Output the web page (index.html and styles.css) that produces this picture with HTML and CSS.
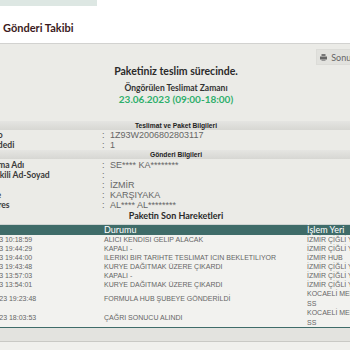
FILE: index.html
```html
<!DOCTYPE html>
<html lang="tr">
<head>
    <meta charset="UTF-8">
    <title>Gönderi Takibi</title>
    <link rel="stylesheet" href="styles.css">
</head>
<body>

    <div class="top"><div class="search_tab"></div></div>
    <div class="heading"><h1>Gönderi Takibi</h1></div>

    <div class="panel">
        <div class="sheet">
            <div class="tools">
                <button class="print_btn">
                    <svg width="7" height="7" viewBox="0 0 7 7"><rect x="1.5" y="0" width="4" height="2" fill="#777"/><rect x="0" y="2.5" width="7" height="3" fill="#666"/><rect x="1.5" y="5" width="4" height="2" fill="#999"/></svg>
                    Sonuç Yazdır
                </button>
            </div>

            <div class="status">
                <p class="status_title">Paketiniz teslim sürecinde.</p>
                <p class="status_label">Öngörülen Teslimat Zamanı</p>
                <p class="status_date">23.06.2023 (09:00-18:00)</p>
            </div>

            <div class="bar">Teslimat ve Paket Bilgileri</div>
            <div class="info_row"><span class="info_label">Takip No</span><span class="info_sep">:</span><span class="info_value">1Z93W2006802803117</span></div>
            <div class="info_row"><span class="info_label">Parça Adedi</span><span class="info_sep">:</span><span class="info_value">1</span></div>

            <div class="bar">Gönderi Bilgileri</div>
            <div class="info_row first"><span class="info_label">Alıcı Firma Adı</span><span class="info_sep">:</span><span class="info_value">SE**** KA********</span></div>
            <div class="info_row"><span class="info_label">Alıcı Yetkili Ad-Soyad</span><span class="info_sep">:</span><span class="info_value"></span></div>
            <div class="info_row"><span class="info_label">Alıcı İl</span><span class="info_sep">:</span><span class="info_value">İZMİR</span></div>
            <div class="info_row"><span class="info_label">Alıcı İlçe</span><span class="info_sep">:</span><span class="info_value">KARŞIYAKA</span></div>
            <div class="info_row"><span class="info_label">Alıcı Adres</span><span class="info_sep">:</span><span class="info_value">AL**** AL********</span></div>

            <div class="moves_title">Paketin Son Hareketleri</div>
            <table class="moves">
                <colgroup><col class="c_date"><col class="c_state"><col class="c_place"></colgroup>
                <thead>
                    <tr><th>Tarih</th><th>Durumu</th><th>İşlem Yeri</th></tr>
                </thead>
                <tbody>
                    <tr><td>23.06.2023 10:18:59</td><td>ALICI KENDISI GELIP ALACAK</td><td>İZMİR ÇİĞLİ YŞ</td></tr>
                    <tr><td>22.06.2023 19:44:29</td><td>KAPALI -</td><td>İZMİR ÇİĞLİ YŞ</td></tr>
                    <tr><td>22.06.2023 19:44:00</td><td>ILERIKI BIR TARIHTE TESLIMAT ICIN BEKLETILIYOR</td><td>İZMİR HUB</td></tr>
                    <tr><td>22.06.2023 19:43:48</td><td>KURYE DAĞITMAK ÜZERE ÇIKARDI</td><td>İZMİR ÇİĞLİ YŞ</td></tr>
                    <tr><td>22.06.2023 13:57:03</td><td>KAPALI -</td><td>İZMİR ÇİĞLİ YŞ</td></tr>
                    <tr><td>22.06.2023 13:54:01</td><td>KURYE DAĞITMAK ÜZERE ÇIKARDI</td><td>İZMİR ÇİĞLİ YŞ</td></tr>
                    <tr class="tall"><td class="shift">21.06.2023 19:23:48</td><td>FORMULA HUB ŞUBEYE GÖNDERİLDİ</td><td>KOCAELİ MERKEZ<br>SS</td></tr>
                    <tr class="tall"><td class="shift">21.06.2023 18:03:53</td><td>ÇAĞRI SONUCU ALINDI</td><td>KOCAELİ MERKEZ<br>SS</td></tr>
                </tbody>
            </table>
        </div>
        <div class="panel_foot"></div>
    </div>

</body>
</html>
```

FILE: styles.css
```css
* {margin: 0; padding: 0;}
body { background: #f0f0ed; overflow: hidden; font-family: Lato, "Noto Sans", sans-serif; }

.top { height: 6px; background: #fff; }
.search_tab { width: 97px; height: 6px; background: #dde7e3; }
.heading { height: 37px; background: #fff; border-bottom: 1px solid #d2d2d0; }
.heading h1 { padding: 15px 0 0 3px; font-size: 11px; line-height: 14px; font-weight: 700; color: #3b1b21; }

.panel { background: #ebebe7; overflow: hidden; }
.sheet { width: 418px; margin-left: -33px; }

.tools { display: flex; justify-content: flex-end; padding-top: 5px; }
.print_btn { display: flex; align-items: center; gap: 4px; height: 16px; padding: 0 3px; border: 1px solid #dcdcd8; background: #e2e2de; color: #666; font-family: Lato, sans-serif; font-size: 9px; }

.status { text-align: center; margin-bottom: 16px; }
.status_title { font-size: 10.5px; line-height: 12px; font-weight: 700; color: #2a2a2a; }
.status_label { margin-top: 6px; font-size: 8.5px; line-height: 10px; font-weight: 700; color: #333; }
.status_date { font-size: 10px; line-height: 12px; font-weight: 700; color: #2eaf6b; }

.bar { height: 9px; line-height: 9px; text-align: center; font-family: "Liberation Sans", Arial, sans-serif; font-size: 6.7px; font-weight: 700; color: #222; background: linear-gradient(#e5e5e2, #d7d7d3); }

.info_row { display: flex; height: 10px; line-height: 10px; padding-left: 2px; white-space: nowrap; }
.info_row.first { margin-top: 1px; }
.info_label { width: 133px; font-size: 8.6px; font-weight: 700; color: #3a3a3a; }
.info_sep, .info_value { font-family: "Liberation Sans", Arial, sans-serif; font-size: 9px; color: #666; }
.info_sep { width: 8px; }

.moves_title { margin: 1px 0 3px; line-height: 10px; font-size: 9px; font-weight: 700; text-align: center; color: #2a2a2a; }

.moves { width: 418px; table-layout: fixed; border-collapse: collapse; border-top: 1px solid #cfd4d2; border-bottom: 1px solid #3f6c69; background: #f2f2ef; font-family: "Liberation Sans", Arial, sans-serif; font-size: 7px; color: #666; }
.c_date { width: 136px; }
.c_state { width: 203px; }
.c_place { width: 79px; }
.moves th { height: 10px; line-height: 10px; padding: 0 0 0 1px; background: #3f6c69; color: #fff; text-align: left; font-family: Lato, sans-serif; font-size: 9px; font-weight: 400; }
.moves td { height: 9px; line-height: 9px; padding: 0 0 0 1px; white-space: nowrap; vertical-align: middle; }
.moves .tall td { line-height: 9.5px; }
.moves td.shift { padding-left: 5px; }

.panel_foot { height: 13px; background: #e3e3df; border-bottom: 1px solid #c9c9c5; }
```
